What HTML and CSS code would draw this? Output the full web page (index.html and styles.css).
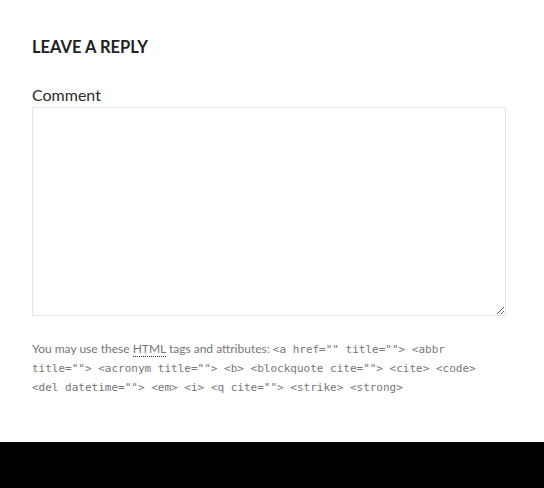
FILE: index.html
```html
<!DOCTYPE html>
<html>
<head>
<meta charset="utf-8">
<link rel="stylesheet" href="styles.css">
</head>
<body>
<div class="page">
  <section class="respond">
    <h3 class="reply-title">Leave a Reply</h3>
    <form class="comment-form">
      <p class="comment-field">
        <label class="label" for="comment">Comment</label>
        <textarea id="comment" class="textarea"></textarea>
      </p>
      <p class="form-notes">You may use these <abbr class="abbr" title="HyperText Markup Language">HTML</abbr> tags and attributes: <code class="code">&lt;a href="" title=""&gt; &lt;abbr title=""&gt; &lt;acronym title=""&gt; &lt;b&gt; &lt;blockquote cite=""&gt; &lt;cite&gt; &lt;code&gt; &lt;del datetime=""&gt; &lt;em&gt; &lt;i&gt; &lt;q cite=""&gt; &lt;strike&gt; &lt;strong&gt; </code></p>
    </form>
  </section>
  <footer class="footer"></footer>
</div>
</body>
</html>
```
FILE: styles.css
```css
html, body {
  margin: 0;
  padding: 0;
  background: #fff;
}
.page {
  height: 488px;
  display: flex;
  flex-direction: column;
  font-family: Lato, "Liberation Sans", sans-serif;
}
.respond {
  flex: 1;
  padding: 37px 38px 0 32px;
}
.reply-title {
  margin: 0;
  font-size: 16.5px;
  font-weight: 700;
  text-transform: uppercase;
  color: #222;
  line-height: 20px;
}
.comment-form {
  margin: 0;
}
.comment-field {
  margin: 28px 0 0;
  display: flex;
  flex-direction: column;
}
.label {
  font-size: 16px;
  color: #2b2b2b;
  line-height: 20px;
  margin-bottom: 2px;
}
.textarea {
  box-sizing: border-box;
  width: 474px;
  height: 209px;
  border: 1px solid #e5e5e5;
  margin: 0;
  padding: 4px;
  resize: vertical;
  background: #fff;
  font-family: inherit;
}
.form-notes {
  margin: 24px 0 0;
  font-size: 12px;
  line-height: 18px;
  color: #767676;
  width: 474px;
}
.abbr {
  text-decoration: none;
  border-bottom: 1px dotted #2b2b2b;
  cursor: help;
}
.code {
  font-family: "DejaVu Sans Mono", monospace;
  font-size: 11px;
  color: #767676;
}
.footer {
  height: 46px;
  background: #000;
}
```
